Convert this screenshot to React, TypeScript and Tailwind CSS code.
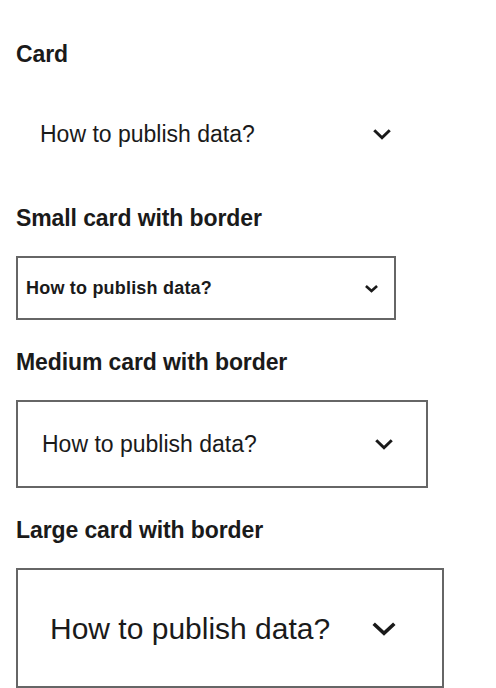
import React from 'react';

const font = { fontFamily: '"Liberation Sans", Arial, sans-serif' };

const Chevron: React.FC<{ w: number; stroke: number }> = ({ w, stroke }) => {
  const h = Math.round(w * 0.58);
  const pad = stroke * 0.75;
  return (
    <svg width={w} height={h} viewBox={`0 0 ${w} ${h}`} fill="none" className="shrink-0">
      <polyline
        points={`${pad},${pad} ${w / 2},${h - pad} ${w - pad},${pad}`}
        stroke="#1a1a1a"
        strokeWidth={stroke}
        strokeLinejoin="miter"
      />
    </svg>
  );
};

const Heading: React.FC<{ children: React.ReactNode }> = ({ children }) => (
  <h2 className="h-7 leading-7 mb-6 text-[23px] font-bold tracking-[-0.1px] text-[#1a1a1a]">{children}</h2>
);

const App: React.FC = () => {
  return (
    <div className="min-h-screen bg-white pl-4 pt-10 text-[#1a1a1a]" style={font}>
      <Heading>Card</Heading>
      <div className="w-[412px] h-[84px] mb-7 flex items-center pl-6 pr-[36px]">
        <span className="text-[23px]">How to publish data?</span>
        <span className="ml-auto"><Chevron w={20} stroke={3} /></span>
      </div>

      <Heading>Small card with border</Heading>
      <div className="w-[380px] h-16 mb-7 border-2 border-[#666] flex items-center pl-2 pr-[15px]">
        <span className="text-[18px] font-bold tracking-[0.2px]">How to publish data?</span>
        <span className="ml-auto"><Chevron w={15} stroke={2.6} /></span>
      </div>

      <Heading>Medium card with border</Heading>
      <div className="w-[412px] h-[88px] mb-7 border-2 border-[#666] flex items-center pl-6 pr-[32px]">
        <span className="text-[23px]">How to publish data?</span>
        <span className="ml-auto"><Chevron w={20} stroke={3} /></span>
      </div>

      <Heading>Large card with border</Heading>
      <div className="w-[428px] h-[120px] border-2 border-[#666] flex items-center pl-8 pr-[45px]">
        <span className="text-[30px]">How to publish data?</span>
        <span className="ml-auto"><Chevron w={26} stroke={3.6} /></span>
      </div>
    </div>
  );
};

export default App;
